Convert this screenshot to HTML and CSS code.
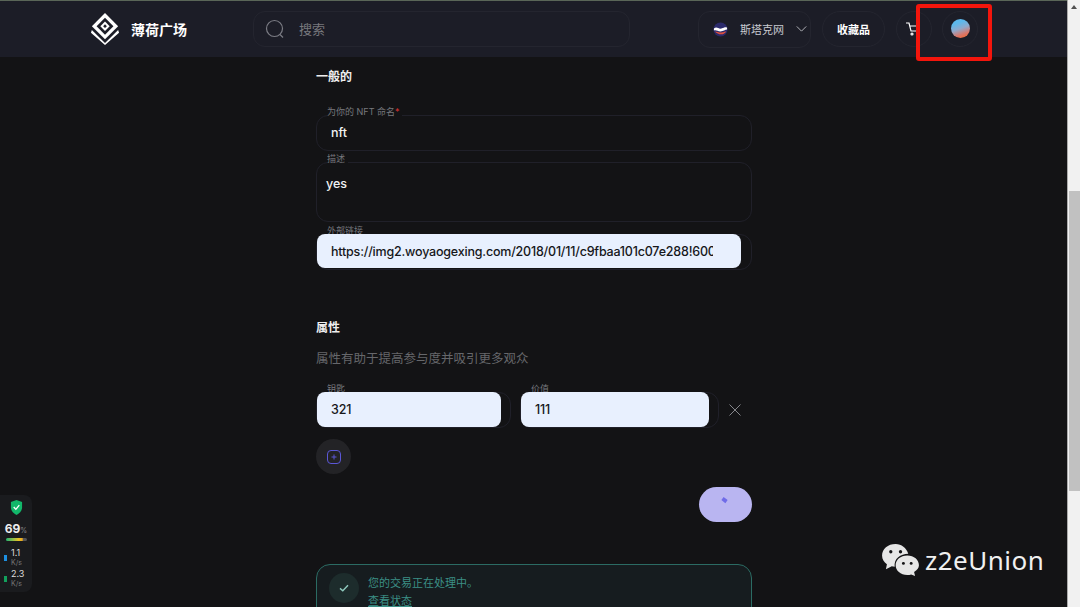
FILE: index.html
```html
<!DOCTYPE html>
<html lang="zh-CN">
<head>
  <meta charset="UTF-8"/>
  <meta name="viewport" content="width=device-width,initial-scale=1.0"/>
  <title>薄荷广场</title>
  <link rel="stylesheet" href="styles.css">
</head>
<body>
  <div class="page">
    <div class="main">
      <header class="top-bar">
        <a class="logo">
          <svg viewBox="0 0 32 36" width="30" height="34">
            <path d="M16 1 30 15 16 29 2 15Z" fill="#fff"/>
            <path d="M16 6 25 15 16 24 7 15Z" fill="#1c1d27"/>
            <path d="M16 10 21 15 16 20 11 15Z" fill="#fff"/>
            <path d="M16 13 18 15 16 17 14 15Z" fill="#1c1d27"/>
            <path d="M2 19 16 33 30 19 31 22 16 35 1 22Z" fill="#fff"/>
          </svg>
          <span>薄荷广场</span>
        </a>
        <div class="search-box">
          <svg viewBox="0 0 20 20" width="20" height="20" fill="none" stroke="#7b7c84" stroke-width="1.2">
            <circle cx="9.5" cy="9.5" r="8"/>
            <path d="M15 15.5 18 18.5"/>
          </svg>
          <span>搜索</span>
        </div>
        <div class="lang-btn">
          <svg viewBox="0 0 16 16" width="15" height="15">
            <circle cx="8" cy="8" r="7.5" fill="#2b2a6b"/>
            <path d="M1 7c3-3 5 1 8 0s4-2 6-1v2c-2 0-4 2-7 2S3 8 1 9Z" fill="#fff"/>
            <path d="M2 10c3 0 5 2 8 1s3-1 4-1c-1 2-3 3-5 3-3 0-5-1-7-3Z" fill="#e0503c"/>
          </svg>
          <span>斯塔克网</span>
          <svg viewBox="0 0 12 7" width="11" height="6" fill="none" stroke="#c8c9cf" stroke-width="1">
            <path d="M.5.5 6 6 11.5.5"/>
          </svg>
        </div>
        <button class="pill-btn">收藏品</button>
        <button class="round-btn cart">
          <svg viewBox="0 0 16 16" width="16" height="16" fill="none" stroke="#fff" stroke-width="1.2">
            <path d="M1 2h3l2 8h8M5 5h10"/>
            <circle cx="7" cy="13" r="1"/>
            <circle cx="13" cy="13" r="1"/>
          </svg>
        </button>
        <button class="round-btn avatar"><i></i></button>
      </header>

      <main class="form-col">
        <h3 class="section-title">一般的</h3>
        <div class="field name-field">
          <label>为你的 NFT 命名<em>*</em></label>
          <div class="value">nft</div>
        </div>
        <div class="field desc-field">
          <label>描述</label>
          <div class="value">yes</div>
        </div>
        <div class="field link-field">
          <label>外部链接</label>
          <div class="autofill"><span>https://img2.woyaogexing.com/2018/01/11/c9fbaa101c07e288!600x600.jpg</span></div>
        </div>

        <h3 class="section-title attr-title">属性</h3>
        <p class="attr-desc">属性有助于提高参与度并吸引更多观众</p>
        <div class="attr-row">
          <div class="field key-field">
            <label>钥匙</label>
            <div class="autofill"><span>321</span></div>
          </div>
          <div class="field val-field">
            <label>价值</label>
            <div class="autofill"><span>111</span></div>
          </div>
          <svg class="remove-icon" viewBox="0 0 12 12" width="12" height="12" fill="none" stroke="#85868b" stroke-width="1">
            <path d="M.5.5 11.5 11.5M11.5.5.5 11.5"/>
          </svg>
        </div>
        <button class="add-btn">
          <svg viewBox="0 0 14 14" width="14" height="14" fill="none" stroke="#5b57d6" stroke-width="1">
            <rect x=".5" y=".5" width="13" height="13" rx="3.5"/>
            <path d="M7 4.500v5M4.500 7h5"/>
          </svg>
        </button>
        <div class="submit-row">
          <button class="submit-btn">
            <svg viewBox="0 0 10 10" width="9" height="9"><path d="M4 1 8.500 4.500 6 8 1.500 4.500Z" fill="#6f6be8"/></svg>
          </button>
        </div>
        <div class="notice">
          <div class="notice-icon">
            <svg viewBox="0 0 12 10" width="10" height="8" fill="none" stroke="#8fc9bd" stroke-width="1.800">
              <path d="M1 5.500 4.500 8.500 11 1.500"/>
            </svg>
          </div>
          <div class="notice-text">
            <div>您的交易正在处理中。</div>
            <a>查看状态</a>
          </div>
        </div>
      </main>
    </div>

    <div class="scrollbar">
      <div class="arrow"></div>
      <div class="thumb"></div>
    </div>
  </div>

  <!-- annotation + overlays -->
  <div class="red-box"></div>

  <div class="net-widget">
    <svg viewBox="0 0 14 16" width="13" height="15">
      <path d="M7 0 13 2V8C13 12 10 14.500 7 16 4 14.500 1 12 1 8V2Z" fill="#12b76a"/>
      <path d="M4 7.500 6.300 10 10 5.500" fill="none" stroke="#fff" stroke-width="1.400"/>
    </svg>
    <div class="net-percent">69<small>%</small></div>
    <div class="net-bar"></div>
    <div class="net-speed up"><b>1.1</b><small>K/s</small></div>
    <div class="net-speed down"><b>2.3</b><small>K/s</small></div>
  </div>

  <div class="watermark">
    <svg viewBox="0 0 40 34" width="39" height="33" fill="#e6e6e6">
      <path d="M15 1C7 1 1 6 1 13c0 4 2 7 5 9l-1 5 6-3c1 .3 2 .4 3 .5C13 16 20 11 28 11 26 5 21 1 15 1Z"/>
      <path d="M27 13c-7 0-12 4.500-12 10s5 10 12 10c1.500 0 3-.2 4-.6l4 1.600-1-4c3-2 5-4 5-7 0-5.500-5-10-12-10Z"/>
      <circle cx="10" cy="9" r="1.700" fill="#131315"/>
      <circle cx="20" cy="9" r="1.700" fill="#131315"/>
      <circle cx="23" cy="21" r="1.500" fill="#131315"/>
      <circle cx="31" cy="21" r="1.500" fill="#131315"/>
    </svg>
    <span>z2eUnion</span>
  </div>
</body>
</html>
```

FILE: styles.css
```css
:root {
  --bg: #131315;
  --header: #1c1d27;
  --line: #202029;
  --head-line: #24252f;
  --muted: #77787d;
  --text: #f2f2f2;
  --autofill: #e8f0fe;
}
* { box-sizing: border-box; }
html, body { height: 100%; }
body {
  margin: 0;
  background: var(--bg);
  color: var(--text);
  font-family: "Inter", "Noto Sans CJK SC", sans-serif;
  overflow: hidden;
}
button { font-family: inherit; background: none; padding: 0; }
h3, p { margin: 0; }

.page { display: flex; height: 607px; overflow: hidden; }
.main { flex: 1; min-width: 0; overflow: hidden; }

.top-bar {
  display: flex; align-items: center;
  height: 57px;
  padding-left: 90px;
  border-top: 1px solid #5a6658;
  background: var(--header);
}
.logo { display: flex; align-items: center; gap: 11px; width: 163px; font-size: 14px; font-weight: 700; color: #fff; }
.search-box {
  display: flex; align-items: center; gap: 14px;
  width: 377px; height: 36px;
  padding-left: 11px;
  border: 1px solid var(--head-line);
  border-radius: 12px;
  font-size: 13px;
  color: var(--muted);
}
.search-box span { margin-bottom: 2px; }
.lang-btn {
  display: flex; align-items: center; gap: 12px;
  width: 113px; height: 37px;
  margin-left: 68px;
  padding-left: 14px;
  border: 1px solid var(--head-line);
  border-radius: 12px;
  font-size: 11px;
  color: #c8c9cf;
}
.pill-btn {
  width: 63px; height: 36px;
  margin-left: 11px;
  border: 1px solid var(--head-line);
  border-radius: 18px;
  font-size: 11px;
  font-weight: 700;
  color: #fff;
}
.round-btn {
  display: flex; align-items: center; justify-content: center;
  width: 36px; height: 36px;
  border: 1px solid var(--head-line);
  border-radius: 50%;
}
.cart { margin-left: 11px; justify-content: flex-start; padding-left: 8px; }
.avatar { margin-left: 10px; }
.avatar i {
  width: 19px; height: 19px;
  margin-bottom: 1px;
  border-radius: 50%;
  background: linear-gradient(160deg, #5cb8ec 25%, #8fa9cc 50%, #d9776a 75%, #f0682f 95%);
}

.form-col { display: flex; flex-direction: column; width: 436px; margin-left: 316px; }
.section-title { font-size: 12px; font-weight: 700; line-height: 18px; color: #eee; }
.form-col > .section-title:first-child { margin-top: 11px; }

.field { position: relative; border: 1px solid var(--line); border-radius: 12px; }
.field label {
  position: absolute; top: -11px; left: 10px;
  padding-right: 3px;
  background: var(--bg);
  font-size: 9px;
  line-height: 13px;
  color: var(--muted);
}
.field label em { font-style: normal; color: #d33; }
.value { font-size: 12.500px; line-height: 18px; font-weight: 500; color: var(--text); }
.name-field { height: 36px; margin-top: 29px; padding: 8px 14px; }
.desc-field { height: 60px; margin-top: 11px; padding: 12px 9px; }
.link-field { height: 36px; margin-top: 12px; }
.autofill {
  position: relative;
  display: flex; align-items: center;
  height: 34px;
  margin-top: -1px;
  background: var(--autofill);
  border-radius: 8px;
  color: #16171a;
  font-size: 12.500px;
  font-weight: 500;
  letter-spacing: -.2px;
  white-space: nowrap;
}
.autofill span { display: block; overflow: hidden; margin-left: 14px; }
.link-field .autofill { width: 424px; }
.link-field .autofill span { width: 382px; }

.attr-title { margin-top: 49px; }
.attr-desc { margin-top: 13px; font-size: 12.500px; line-height: 18px; color: #66676b; }

.attr-row { display: flex; align-items: center; margin-top: 24px; }
.key-field { width: 195px; height: 36px; }
.key-field .autofill { width: 184px; height: 35px; }
.val-field { width: 199px; height: 36px; margin-left: 9px; }
.val-field .autofill { width: 188px; height: 35px; }
.remove-icon { margin-left: 10px; }

.add-btn {
  display: flex; align-items: center; justify-content: center;
  width: 35px; height: 35px;
  margin-top: 11px;
  border: 0;
  border-radius: 50%;
  background: #232326;
}
.submit-row { display: flex; justify-content: flex-end; margin-top: 13px; }
.submit-btn {
  display: flex; justify-content: center;
  width: 53px; height: 35px;
  padding: 9px 2px 0 0;
  border: 0;
  border-radius: 18px;
  background: #b9b5f1;
}
.notice {
  display: flex; gap: 9px;
  height: 70px;
  margin-top: 42px;
  padding: 9px 12px;
  border: 1px solid #2b6b63;
  border-radius: 14px;
  background: #161c1f;
  color: #3b8f85;
  font-size: 11px;
  line-height: 18px;
}
.notice-icon {
  display: flex; align-items: center; justify-content: center;
  width: 30px; height: 30px;
  margin-top: -1px;
  border-radius: 50%;
  background: #1d2c2c;
}
.notice-text a { display: block; width: fit-content; text-decoration: underline; text-underline-offset: 1px; }

.scrollbar { width: 13px; border-left: 1px solid #ababab; background: #f1f1f1; }
.arrow {
  width: 0; height: 0;
  margin: 5px auto 0;
  border: 3px solid transparent;
  border-top: 0;
  border-bottom: 4px solid #505050;
}
.thumb { width: 11px; height: 300px; margin: 182px 0 0 .5px; background: #c1c1c1; }

.red-box {
  position: absolute; top: 4px; left: 916px;
  width: 76px; height: 57px;
  border: 4px solid #f3150c;
  border-radius: 3px;
}

.net-widget {
  position: absolute; left: 0; top: 495px;
  display: flex; flex-direction: column; align-items: center;
  width: 32px; height: 97px;
  padding-top: 5px;
  border-radius: 0 8px 8px 0;
  background: #1a1b1e;
}
.net-percent { margin-top: 7px; font-size: 12px; font-weight: 700; line-height: 14px; color: #eee; }
.net-percent small { font-size: 7px; font-weight: 400; color: #888; }
.net-bar {
  width: 21px; height: 3px;
  background: linear-gradient(90deg, #21b573, #e8c127 60%, #e8a51f 78%, #555 80%);
  border-radius: 2px;
}
.net-speed {
  position: relative;
  display: flex; flex-direction: column; align-items: flex-start;
  width: 22px; height: 21px;
  padding-left: 6px;
  font-size: 9px; line-height: 10px;
  color: #ddd;
}
.net-bar + .net-speed { margin-top: 7px; }
.net-speed b { font-weight: 400; }
.net-speed small { font-size: 7px; color: #777; }
.net-speed::before {
  content: ""; position: absolute; left: -1px; top: 7px;
  width: 3px; height: 6px; background: #1d8fe0;
}
.net-speed.down::before { background: #12a05c; }

.watermark {
  position: absolute; left: 881px; top: 542px;
  display: flex; align-items: center; gap: 5px;
  color: #f0f0f0;
  font-family: "Noto Sans", sans-serif;
  font-size: 26px;
  letter-spacing: .5px;
  line-height: 36px;
}
.watermark svg { margin-top: -2px; }
```
